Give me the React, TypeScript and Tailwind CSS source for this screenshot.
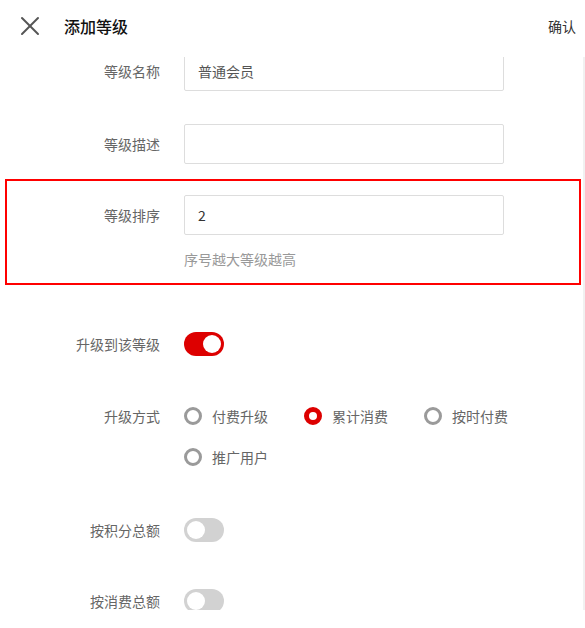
import React from 'react';
import { X } from 'lucide-react';

const font = { fontFamily: '"Noto Sans CJK SC", "Noto Sans", sans-serif' };

const Toggle = ({ on }: { on: boolean }) => (
  <div
    className={`w-[40px] h-[24px] rounded-full flex items-center px-[3px] ${on ? 'bg-[#dd0000] justify-end' : 'bg-[#d2d2d2] justify-start'}`}
  >
    <div className="w-[18px] h-[18px] rounded-full bg-white" />
  </div>
);

const Radio = ({ label, checked }: { label: string; checked?: boolean }) => (
  <div className="w-[120px] flex items-center h-[20px]">
    <span
      className={`w-[18px] h-[18px] rounded-full bg-white ${checked ? 'border-[5px] border-[#dd0000]' : 'border-[3px] border-[#9a9a9a]'}`}
    />
    <span className="ml-[10px] text-[14px] text-[#666]">{label}</span>
  </div>
);

const Label = ({ children }: { children: React.ReactNode }) => (
  <div className="w-[160px] shrink-0 text-right text-[14px] text-[#666] leading-[16px]">{children}</div>
);

export default function App() {
  return (
    <div className="w-[585px] h-[628px] bg-white overflow-hidden" style={font}>
      {/* Header */}
      <div className="h-[52px] flex items-center pl-[14px] pr-[9px]">
        <X size={32} strokeWidth={1.5} className="text-[#555]" />
        <span className="ml-[18px] text-[16px] font-medium text-[#111]">添加等级</span>
        <span className="ml-auto text-[14px] text-[#333]">确认</span>
      </div>

      {/* Scroll area */}
      <div className="mt-[5px] h-[553px] flex">
        <div className="flex-1 overflow-hidden">
          <div className="-mt-[6px]">
            <div className="flex items-center h-[40px]">
              <Label>等级名称</Label>
              <div className="ml-[24px] w-[320px] h-[40px] border border-[#ddd] rounded-[2px] flex items-center pl-[13px] text-[14px] text-[#555]">
                普通会员
              </div>
            </div>

            <div className="flex items-center h-[40px] mt-[33px]">
              <Label>等级描述</Label>
              <div className="ml-[24px] w-[320px] h-[40px] border border-[#ddd] rounded-[2px]" />
            </div>

            <div className="relative mt-[31px]">
              <div className="flex items-center h-[40px]">
                <Label>等级排序</Label>
                <div className="ml-[24px] w-[320px] h-[40px] border border-[#ddd] rounded-[2px] flex items-center pl-[13px] text-[14px] text-[#333]">
                  2
                </div>
              </div>
              <div className="ml-[184px] mt-[14px] text-[14px] leading-[20px] text-[#999]">序号越大等级越高</div>
              <div className="absolute left-[5px] w-[576px] top-[-16px] bottom-[-16px] border-2 border-[#ff0000] pointer-events-none" />
            </div>

            <div className="flex items-center h-[24px] mt-[63px]">
              <Label>升级到该等级</Label>
              <div className="ml-[24px]">
                <Toggle on />
              </div>
            </div>

            <div className="flex items-start mt-[50px]">
              <div className="pt-[2px]">
                <Label>升级方式</Label>
              </div>
              <div className="ml-[24px] flex flex-wrap w-[360px] gap-y-[21px]">
                <Radio label="付费升级" />
                <Radio label="累计消费" checked />
                <Radio label="按时付费" />
                <Radio label="推广用户" />
              </div>
            </div>

            <div className="flex items-center h-[24px] mt-[51px]">
              <Label>按积分总额</Label>
              <div className="ml-[24px]">
                <Toggle on={false} />
              </div>
            </div>

            <div className="flex items-center h-[24px] mt-[47px]">
              <Label>按消费总额</Label>
              <div className="ml-[24px]">
                <Toggle on={false} />
              </div>
            </div>
          </div>
        </div>
        <div className="w-[2px] bg-[#f1f1f1]" />
      </div>
    </div>
  );
}
